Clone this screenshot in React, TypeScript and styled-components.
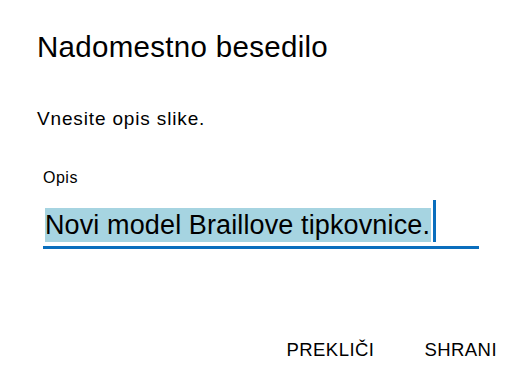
import React from "react";
import styled, { createGlobalStyle } from "styled-components";

const Global = createGlobalStyle`
  html, body { margin: 0; padding: 0; background: #ffffff; }
  body { font-family: "Liberation Sans", Arial, sans-serif; color: #000; }
`;

const Dialog = styled.div`
  width: 520px;
  height: 380px;
  box-sizing: border-box;
  padding: 31px 23px 0 37px;
  display: flex;
  flex-direction: column;
`;

const Title = styled.h1`
  margin: 0;
  font-size: 29.5px;
  font-weight: 400;
  line-height: 32px;
  letter-spacing: 0.3px;
`;

const Prompt = styled.p`
  margin: 45px 0 0 0;
  font-size: 19px;
  line-height: 22px;
  letter-spacing: 0.85px;
`;

const Field = styled.div`
  margin: 39px 0 0 6px;
  display: flex;
  flex-direction: column;
  width: 436px;
`;

const Label = styled.div`
  font-size: 16px;
  line-height: 18px;
  letter-spacing: 0.5px;
`;

const InputRow = styled.div`
  margin-top: 13px;
  display: flex;
  align-items: flex-end;
  border-bottom: 3px solid #0a6ebd;
  padding: 0 0 4px 2px;
`;

const Selected = styled.span`
  background: #a6d4e1;
  font-size: 27px;
  line-height: 34px;
  letter-spacing: 0.12px;
  padding: 0 1px 0 0;
`;

const Caret = styled.span`
  width: 3px;
  height: 42px;
  background: #0a6ebd;
  margin-left: 2px;
`;

const Actions = styled.div`
  margin-top: auto;
  margin-bottom: 19px;
  display: flex;
  justify-content: flex-end;
  gap: 50px;
`;

const Button = styled.button`
  background: none;
  border: none;
  padding: 0;
  font-family: "Liberation Sans", Arial, sans-serif;
  font-size: 18.5px;
  line-height: 22px;
  letter-spacing: 0.45px;
  color: #000;
  cursor: pointer;
`;

export default function App() {
  return (
    <>
      <Global />
      <Dialog>
        <Title>Nadomestno besedilo</Title>
        <Prompt>Vnesite opis slike.</Prompt>
        <Field>
          <Label>Opis</Label>
          <InputRow>
            <Selected>Novi model Braillove tipkovnice.</Selected>
            <Caret />
          </InputRow>
        </Field>
        <Actions>
          <Button>PREKLIČI</Button>
          <Button>SHRANI</Button>
        </Actions>
      </Dialog>
    </>
  );
}
